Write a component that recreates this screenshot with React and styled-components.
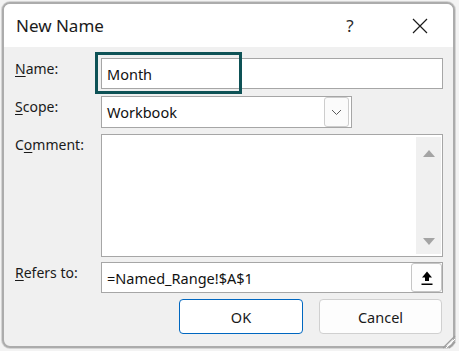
import styled, { createGlobalStyle } from 'styled-components'

const GlobalStyle = createGlobalStyle`
  html, body {
    margin: 0;
    background: #f3f3f3;
  }
  body {
    font-family: "Noto Sans", "Open Sans", sans-serif;
    color: #1a1a1a;
  }
`

const Dialog = styled.div`
  position: relative;
  box-sizing: border-box;
  margin: 2px;
  width: 453px;
  height: 346px;
  border: 2px solid #acacac;
  border-radius: 8px;
  box-shadow: 0 0 0 1px #d4d4d4;
  display: flex;
  flex-direction: column;
  background: #f0f0f0;
`

const TitleBar = styled.div`
  height: 43px;
  flex-shrink: 0;
  display: flex;
  align-items: center;
  padding-left: 12px;
  background: #ffffff;
  border-radius: 6px 6px 0 0;
`

const Title = styled.div`
  font-size: 17px;
  color: #1b1b1b;
  flex: 1;
`

const TitleControl = styled.div`
  width: 20px;
  display: flex;
  justify-content: center;
  align-items: center;
  font-size: 17px;
  color: #2a2a2a;
  margin-right: ${p => p.$mr}px;
`

const Body = styled.div`
  flex: 1;
  display: flex;
  flex-direction: column;
  padding: 11px 10px 12px 11px;
  border-radius: 0 0 6px 6px;
`

const Row = styled.div`
  display: flex;
  align-items: flex-start;
  margin-top: ${p => p.$gap || 0}px;
`

const Label = styled.label`
  width: 86px;
  flex-shrink: 0;
  font-size: 14px;
  line-height: 20px;
  padding-top: 1px;
  color: #1a1a1a;

  u {
    text-decoration-thickness: 1px;
    text-underline-offset: 2px;
  }
`

const Field = styled.div`
  position: relative;
  box-sizing: border-box;
  flex: ${p => (p.$width ? '0 0 auto' : 1)};
  width: ${p => (p.$width ? `${p.$width}px` : 'auto')};
  height: ${p => p.$height}px;
  border: 1px solid #a6a6a6;
  background: #ffffff;
  display: flex;
  align-items: center;
  font-size: 14.5px;
  color: #111;
  padding-left: 5px;
`

const FieldText = styled.span`
  flex: 1;
  white-space: nowrap;
`

const Highlight = styled.div`
  position: absolute;
  left: -7px;
  top: -7px;
  width: 147px;
  height: 42px;
  box-sizing: border-box;
  border: 3px solid #0e5256;
  pointer-events: none;
`

const DropButton = styled.div`
  box-sizing: border-box;
  width: 25px;
  height: 30px;
  margin-right: 2px;
  border: 1px solid #cdcdcd;
  border-radius: 3px;
  background: #fbfbfb;
  display: flex;
  align-items: center;
  justify-content: center;
`

const MemoBox = styled.div`
  box-sizing: border-box;
  flex: 1;
  height: 123px;
  border: 1px solid #a6a6a6;
  background: #ffffff;
  display: flex;
  justify-content: flex-end;
  padding: 2px 1px 2px 0;
`

const ScrollBar = styled.div`
  width: 25px;
  background: #f0f0f0;
  display: flex;
  flex-direction: column;
  justify-content: space-between;
  align-items: center;
  padding: 13px 0 9px;
  box-sizing: border-box;
`

const Arrow = styled.div`
  width: 0;
  height: 0;
  border-left: 6px solid transparent;
  border-right: 6px solid transparent;
  ${p => (p.$down ? 'border-top: 7px solid #a4a4a4;' : 'border-bottom: 7px solid #a4a4a4;')}
`

const CollapseButton = styled.div`
  box-sizing: border-box;
  width: 31px;
  height: 29px;
  border: 1px solid #c6c6c6;
  border-radius: 3px;
  background: #fdfdfd;
  display: flex;
  align-items: center;
  justify-content: center;
`

const ButtonRow = styled.div`
  display: flex;
  justify-content: flex-end;
  gap: 16px;
  margin-top: 6px;
  padding-right: 1px;
`

const Button = styled.button`
  box-sizing: border-box;
  width: ${p => p.$width}px;
  height: 35px;
  border-radius: 4px;
  border: 1px solid ${p => (p.$primary ? '#0067c0' : '#d0d0d0')};
  background: ${p => (p.$primary ? '#ffffff' : '#fdfdfd')};
  font-family: "Noto Sans", "Open Sans", sans-serif;
  font-size: 14.5px;
  color: #1a1a1a;
  padding: 0;
`

const Grip = styled.svg`
  position: absolute;
  right: -3px;
  bottom: -3px;
`

const Chevron = () => (
  <svg width="11" height="7" viewBox="0 0 11 7">
    <path d="M1 1 L5.5 5.5 L10 1" fill="none" stroke="#5a5a5a" strokeWidth="1" />
  </svg>
)

const CloseIcon = () => (
  <svg width="16" height="16" viewBox="0 0 16 16">
    <path d="M1 1 L15 15 M15 1 L1 15" stroke="#1b1b1b" strokeWidth="1.2" fill="none" />
  </svg>
)

const UploadIcon = () => (
  <svg width="14" height="16" viewBox="0 0 14 16">
    <path d="M7 1.5 L12 7.5 L9 7.5 L9 11 L5 11 L5 7.5 L2 7.5 Z" fill="#000" />
    <rect x="1.5" y="13.5" width="11" height="1.5" fill="#000" />
  </svg>
)

export default function App() {
  return (
    <>
      <GlobalStyle />
      <Dialog>
        <TitleBar>
          <Title>New Name</Title>
          <TitleControl $mr={50}>?</TitleControl>
          <TitleControl $mr={23}>
            <CloseIcon />
          </TitleControl>
        </TitleBar>

        <Body>
          <Row>
            <Label><u>N</u>ame:</Label>
            <Field $height={31}>
              <FieldText>Month</FieldText>
              <Highlight />
            </Field>
          </Row>

          <Row $gap={7}>
            <Label><u>S</u>cope:</Label>
            <Field $height={32} $width={251}>
              <FieldText>Workbook</FieldText>
              <DropButton>
                <Chevron />
              </DropButton>
            </Field>
          </Row>

          <Row $gap={6}>
            <Label>C<u>o</u>mment:</Label>
            <MemoBox>
              <ScrollBar>
                <Arrow />
                <Arrow $down />
              </ScrollBar>
            </MemoBox>
          </Row>

          <Row $gap={5}>
            <Label><u>R</u>efers to:</Label>
            <Field $height={31}>
              <FieldText>=Named_Range!$A$1</FieldText>
              <CollapseButton>
                <UploadIcon />
              </CollapseButton>
            </Field>
          </Row>

          <ButtonRow>
            <Button $primary $width={124}>OK</Button>
            <Button $width={123}>Cancel</Button>
          </ButtonRow>
        </Body>

        <Grip width="17" height="17" viewBox="0 0 17 17">
          <path d="M16 4 L4 16" stroke="#9c9c9c" strokeWidth="1.3" />
          <path d="M16 7 L7 16" stroke="#ffffff" strokeWidth="1" />
          <path d="M16 10 L10 16" stroke="#9c9c9c" strokeWidth="1.3" />
        </Grip>
      </Dialog>
    </>
  )
}
